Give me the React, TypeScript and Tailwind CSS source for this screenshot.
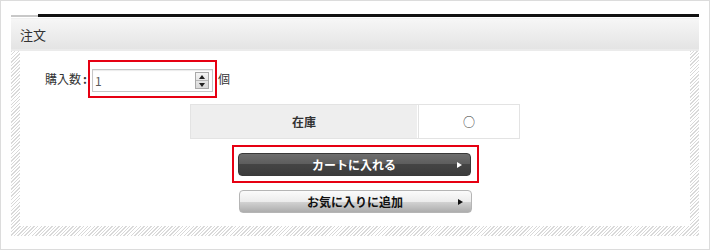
const hatch =
  'bg-[repeating-linear-gradient(135deg,#d9d9d9_0px,#d9d9d9_1px,#ffffff_1px,#ffffff_2.5px)]'

const Arrow = ({ color }: { color: string }) => (
  <svg width="5" height="6" viewBox="0 0 5 6" className="absolute right-[8px] top-1/2 -translate-y-1/2">
    <path d="M0 0 L5 3 L0 6 Z" fill={color} />
  </svg>
)

const Spinner = () => (
  <div className="flex h-[17px] w-[14px] flex-col border border-[#a9a9a9] bg-[linear-gradient(#f4f4f4,#d9d9d9)]">
    <div className="flex flex-1 items-center justify-center border-b border-[#b8b8b8]">
      <svg width="6" height="4" viewBox="0 0 6 4">
        <path d="M0 4 L3 0 L6 4 Z" fill="#222" />
      </svg>
    </div>
    <div className="flex flex-1 items-center justify-center">
      <svg width="6" height="4" viewBox="0 0 6 4">
        <path d="M0 0 L3 4 L6 0 Z" fill="#222" />
      </svg>
    </div>
  </div>
)

export default function App() {
  return (
    <div
      className="box-border h-[250px] w-[710px] border border-[#dcdcdc] bg-white px-[10px] pt-[13px] text-[#333]"
      style={{ fontFamily: '"Noto Sans CJK JP", "Noto Sans", sans-serif' }}
    >
      {/* top rule */}
      <div className="flex h-[3px]">
        <div className="mt-[1px] w-[27px] bg-[#c8c8c8]" />
        <div className="flex-1 bg-[#111]" />
      </div>

      {/* header */}
      <div className="mt-[1px] flex h-[31px] items-center border-t border-[#f0f0f0] bg-[linear-gradient(#f6f6f6,#e4e4e4)] pl-[9px] text-[13px] leading-none">
        注文
      </div>
      <div className="h-[2px] bg-[#ebebeb]" />

      {/* body with hatched frame */}
      <div className={`${hatch} px-[9px] pb-[10px]`}>
        <div className="flex h-[175px] flex-col bg-white">
          <div className="mt-[9px] flex items-center pl-[25px] text-[12px]">
            <span className="flex w-[43px] items-center whitespace-nowrap leading-none">
              購入数<span className="ml-[2px] font-bold">:</span>
            </span>
            <div className="border-2 border-[#e60012] px-[2px] pb-[4px] pt-[7px]">
              <div className="flex h-[23px] w-[121px] items-center justify-between border border-[#c6c6c6] bg-white pl-[2px] pr-[3px] shadow-[inset_0_1px_1px_rgba(0,0,0,0.08)]">
                <span className="text-[12px] text-[#5a5a5a]">1</span>
                <Spinner />
              </div>
            </div>
            <span className="ml-[1px] leading-none">個</span>
          </div>

          <div className="mx-auto mt-[6px] flex h-[35px] w-[330px] border border-[#e3e3e3] text-[12px]">
            <div className="flex w-[227px] items-center justify-center border-r border-white bg-[#eeeeee] font-bold">
              在庫
            </div>
            <div className="flex flex-1 items-center justify-center border-l border-[#e3e3e3]">
              ○
            </div>
          </div>

          <div className="mx-auto mt-[6px] w-[247px] border-2 border-[#e60012] pb-[5px] pl-[4px] pr-[6px] pt-[6px]">
            <button className="relative flex h-[23px] w-[233px] items-center justify-center rounded-[4px] border border-[#3a3a3a] bg-[linear-gradient(#6e6e6e_0%,#5c5c5c_50%,#444444_50%,#3c3c3c_100%)] text-[12px] font-bold text-white">
              カートに入れる
              <Arrow color="#fff" />
            </button>
          </div>

          <button className="relative mx-auto mt-[7px] flex h-[23px] w-[233px] items-center justify-center rounded-[4px] border border-[#b5b5b5] bg-[linear-gradient(#fbfbfb_0%,#ececec_50%,#d4d4d4_50%,#adadad_100%)] text-[12px] font-bold text-[#111]">
            お気に入りに追加
            <Arrow color="#111" />
          </button>
        </div>
      </div>
    </div>
  )
}
